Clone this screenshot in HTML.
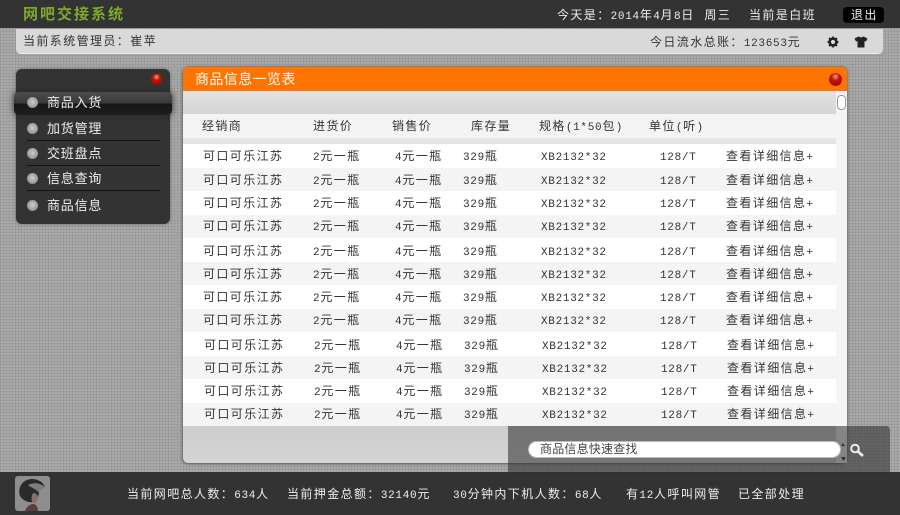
<!DOCTYPE html>
<html lang="zh"><head><meta charset="utf-8"><title>网吧交接系统</title>
<style>
*{margin:0;padding:0;box-sizing:border-box}
html,body{width:900px;height:515px;overflow:hidden}
body{position:relative;background-color:#a9a9a9;background-image:repeating-linear-gradient(0deg,rgba(90,90,90,.14) 0 1px,transparent 1px 3px),repeating-linear-gradient(90deg,rgba(90,90,90,.14) 0 1px,transparent 1px 3px);font-family:"Liberation Sans","WenQuanYi Zen Hei","Noto Sans CJK SC",sans-serif;font-size:12px;letter-spacing:1.4px;color:#333}
.a,.r span{position:absolute;white-space:nowrap;line-height:16px}
i{font:normal 11px/16px "Liberation Mono",monospace;letter-spacing:.7px}
.w{color:#eee}
#top{position:absolute;left:0;top:0;width:900px;height:28px;background:#333}
#sub{position:absolute;left:16px;top:29px;width:867px;height:25px;background:#d9d9d9;border-radius:0 0 5px 5px;border-bottom:1px solid #eee}
#menu{position:absolute;left:16px;top:69px;width:154px;height:155px;background:#333;border-radius:6px;box-shadow:0 0 3px #666}
#act{position:absolute;left:14px;top:92px;width:158px;height:23px;border-radius:5px;background:linear-gradient(#4c4c4c 0,#3a3a3a 48%,#161616 52%,#1e1e1e 100%);box-shadow:0 0 6px 1px rgba(40,40,40,.7)}
.sep{position:absolute;left:27px;width:133px;height:1px;background:#111}
.dot{position:absolute;left:27px;width:11px;height:11px;border-radius:50%;background:radial-gradient(circle at 50% 45%,#ccc,#999 65%,#666)}
.red{position:absolute;border-radius:50%;background:radial-gradient(circle at 50% 28%,#e8a090 0,#c81200 35%,#8a0a00 100%)}
#panel{position:absolute;left:183px;top:67px;width:664px;height:396px;background:linear-gradient(#ccc,#ccc 90%,#d4d4d4);border-radius:5px;box-shadow:-1px 1px 2px #666,1px 0 2px #777,0 -1px 1px #888}
#head{position:absolute;left:0;top:0;width:664px;height:24px;background:#ff7300;border-radius:5px 5px 0 0}
#band{position:absolute;left:0;top:24px;width:653px;height:23px;background:linear-gradient(#e2e1e1,#d5d3d3)}
#th{position:absolute;left:0;top:47px;width:653px;height:24px;background:#f4f4f4}
#th2{position:absolute;left:0;top:71px;width:653px;height:6px;background:#e5e5e5}
#sb{position:absolute;left:653px;top:24px;width:11px;height:372px;background:#f4f4f4}
#thumb{position:absolute;left:654px;top:28px;width:9px;height:15px;background:#fff;border:1px solid #999;border-radius:4px}
.b{position:absolute;left:183px;width:653px}
.r{position:absolute;left:0;width:900px;height:16px}
.r span:nth-child(1){left:203px}.r span:nth-child(2){left:313px}.r span:nth-child(3){left:395px}.r span:nth-child(4){left:463px}.r span:nth-child(5){left:541px}.r span:nth-child(6){left:660px}.r span:nth-child(7){left:726px}
.s{margin-left:1px}
#bot{position:absolute;left:0;top:472px;width:900px;height:43px;background:#333}
#search{position:absolute;left:508px;top:426px;width:382px;height:47px;background:rgba(45,45,45,.56);border-radius:0 4px 0 0}
#inp{position:absolute;left:528px;top:441px;width:313px;height:17px;background:#fff;border-radius:9px;border:1px solid #bbb}
.m13{font-size:13px;letter-spacing:.8px}
</style></head><body>
<div id="top"></div>
<div class="a" style="left:23px;top:6px;font-size:15px;line-height:17px;font-weight:bold;color:#7fa92e;letter-spacing:2px">网吧交接系统</div>
<div class="a w" style="left:557px;top:7px;word-spacing:5px">今天是：<i>2014</i>年<i>4</i>月<i>8</i>日 周三</div>
<div class="a w" style="left:749px;top:7px">当前是白班</div>
<div style="position:absolute;left:843px;top:7px;width:41px;height:16px;background:#000;border-radius:4px"></div>
<div class="a w" style="left:851px;top:7px">退出</div>
<div id="sub"></div>
<div class="a" style="left:23px;top:33px">当前系统管理员：崔苹</div>
<div class="a" style="left:650px;top:34px">今日流水总账：<i>123653</i>元</div>
<svg style="position:absolute;left:826px;top:35px" width="14" height="14" viewBox="0 0 14 14"><circle cx="7" cy="7" r="3.4" fill="none" stroke="#222" stroke-width="2.6"/><path d="M7 1.5v2M7 10.5v2M1.5 7h2M10.5 7h2M3 3l1.4 1.4M9.6 9.6L11 11M11 3L9.6 4.4M4.4 9.6L3 11" stroke="#222" stroke-width="1.7"/></svg>
<svg style="position:absolute;left:854px;top:36px" width="14" height="12" viewBox="0 0 14 12"><path d="M4.5 .5L.5 2.5 2 5.5 3.5 5V11.5H10.5V5L12 5.5 13.5 2.5 9.5 .5 7 1.5Z" fill="#222"/></svg>

<div id="menu"></div>
<div class="red" style="left:151px;top:74px;width:11px;height:11px"></div>
<div id="act"></div>
<div class="sep" style="top:140px"></div><div class="sep" style="top:165px"></div><div class="sep" style="top:190px"></div>
<div class="dot" style="top:97px"></div><div class="dot" style="top:123px"></div><div class="dot" style="top:148px"></div><div class="dot" style="top:173px"></div><div class="dot" style="top:200px"></div>
<div class="a w m13" style="left:47px;top:95px">商品入货</div>
<div class="a w m13" style="left:47px;top:121px">加货管理</div>
<div class="a w m13" style="left:47px;top:146px">交班盘点</div>
<div class="a w m13" style="left:47px;top:171px">信息查询</div>
<div class="a w m13" style="left:47px;top:198px">商品信息</div>

<div id="panel"><div id="head"></div><div id="band"></div><div id="th"></div><div id="th2"></div><div id="sb"></div><div id="thumb"></div></div>
<div class="a" style="left:195px;top:71px;font-size:14px;letter-spacing:.4px;color:#fff">商品信息一览表</div>
<div class="red" style="left:829px;top:73px;width:13px;height:13px"></div>
<div class="a" style="left:202px;top:118px">经销商</div>
<div class="a" style="left:313px;top:118px">进货价</div>
<div class="a" style="left:392px;top:118px">销售价</div>
<div class="a" style="left:471px;top:118px">库存量</div>
<div class="a" style="left:539px;top:118px">规格<i>(1*50</i>包<i>)</i></div>
<div class="a" style="left:649px;top:118px">单位<i>(</i>听<i>)</i></div>

<div class="b" style="top:144px;height:24px;background:#fff"></div>
<div class="b" style="top:168px;height:23px;background:#f4f4f4"></div>
<div class="b" style="top:191px;height:24px;background:#fff"></div>
<div class="b" style="top:215px;height:23px;background:#f4f4f4"></div>
<div class="b" style="top:238px;height:24px;background:#fff"></div>
<div class="b" style="top:262px;height:23px;background:#f4f4f4"></div>
<div class="b" style="top:285px;height:24px;background:#fff"></div>
<div class="b" style="top:309px;height:23px;background:#f4f4f4"></div>
<div class="b" style="top:332px;height:24px;background:#fff"></div>
<div class="b" style="top:356px;height:23px;background:#f4f4f4"></div>
<div class="b" style="top:379px;height:24px;background:#fff"></div>
<div class="b" style="top:403px;height:23px;background:#f4f4f4"></div>

<div class="r" style="top:148px"><span>可口可乐江苏</span><span><i>2</i>元一瓶</span><span><i>4</i>元一瓶</span><span><i>329</i>瓶</span><span><i>XB2132*32</i></span><span><i>128/T</i></span><span>查看详细信息<i>+</i></span></div>
<div class="r" style="top:172px"><span>可口可乐江苏</span><span><i>2</i>元一瓶</span><span><i>4</i>元一瓶</span><span><i>329</i>瓶</span><span><i>XB2132*32</i></span><span><i>128/T</i></span><span>查看详细信息<i>+</i></span></div>
<div class="r" style="top:195px"><span>可口可乐江苏</span><span><i>2</i>元一瓶</span><span><i>4</i>元一瓶</span><span><i>329</i>瓶</span><span><i>XB2132*32</i></span><span><i>128/T</i></span><span>查看详细信息<i>+</i></span></div>
<div class="r" style="top:218px"><span>可口可乐江苏</span><span><i>2</i>元一瓶</span><span><i>4</i>元一瓶</span><span><i>329</i>瓶</span><span><i>XB2132*32</i></span><span><i>128/T</i></span><span>查看详细信息<i>+</i></span></div>
<div class="r" style="top:243px"><span>可口可乐江苏</span><span><i>2</i>元一瓶</span><span><i>4</i>元一瓶</span><span><i>329</i>瓶</span><span><i>XB2132*32</i></span><span><i>128/T</i></span><span>查看详细信息<i>+</i></span></div>
<div class="r" style="top:266px"><span>可口可乐江苏</span><span><i>2</i>元一瓶</span><span><i>4</i>元一瓶</span><span><i>329</i>瓶</span><span><i>XB2132*32</i></span><span><i>128/T</i></span><span>查看详细信息<i>+</i></span></div>
<div class="r" style="top:289px"><span>可口可乐江苏</span><span><i>2</i>元一瓶</span><span><i>4</i>元一瓶</span><span><i>329</i>瓶</span><span><i>XB2132*32</i></span><span><i>128/T</i></span><span>查看详细信息<i>+</i></span></div>
<div class="r" style="top:312px"><span>可口可乐江苏</span><span><i>2</i>元一瓶</span><span><i>4</i>元一瓶</span><span><i>329</i>瓶</span><span><i>XB2132*32</i></span><span><i>128/T</i></span><span>查看详细信息<i>+</i></span></div>
<div class="r" style="top:337px"><span class="s">可口可乐江苏</span><span class="s"><i>2</i>元一瓶</span><span class="s"><i>4</i>元一瓶</span><span class="s"><i>329</i>瓶</span><span class="s"><i>XB2132*32</i></span><span class="s"><i>128/T</i></span><span class="s">查看详细信息<i>+</i></span></div>
<div class="r" style="top:360px"><span class="s">可口可乐江苏</span><span class="s"><i>2</i>元一瓶</span><span class="s"><i>4</i>元一瓶</span><span class="s"><i>329</i>瓶</span><span class="s"><i>XB2132*32</i></span><span class="s"><i>128/T</i></span><span class="s">查看详细信息<i>+</i></span></div>
<div class="r" style="top:383px"><span class="s">可口可乐江苏</span><span class="s"><i>2</i>元一瓶</span><span class="s"><i>4</i>元一瓶</span><span class="s"><i>329</i>瓶</span><span class="s"><i>XB2132*32</i></span><span class="s"><i>128/T</i></span><span class="s">查看详细信息<i>+</i></span></div>
<div class="r" style="top:406px"><span class="s">可口可乐江苏</span><span class="s"><i>2</i>元一瓶</span><span class="s"><i>4</i>元一瓶</span><span class="s"><i>329</i>瓶</span><span class="s"><i>XB2132*32</i></span><span class="s"><i>128/T</i></span><span class="s">查看详细信息<i>+</i></span></div>

<div id="bot"></div>
<div id="search"></div>
<div id="inp"></div>
<div class="a" style="left:540px;top:441px;color:#444;letter-spacing:.2px">商品信息快速查找</div>
<svg style="position:absolute;left:840px;top:443px" width="7" height="20" viewBox="0 0 7 20"><path d="M1 3L3 0 5 3ZM1 14H6L3.5 18Z" fill="#333"/></svg>
<svg style="position:absolute;left:849px;top:443px" width="16" height="15" viewBox="0 0 16 15"><circle cx="6" cy="5.5" r="3.8" fill="none" stroke="#eee" stroke-width="2"/><path d="M9 8.5L14 13" stroke="#eee" stroke-width="2.6"/></svg>
<svg style="position:absolute;left:15px;top:476px" width="35" height="35" viewBox="0 0 35 35"><rect width="35" height="35" rx="3" fill="#8e8e8e"/><path d="M5 20C2 10 9 3 17 3c6 0 11 3 13 8l-6 4c0 5-2 10-5 11-5 1-11-1-14-6z" fill="#2a2a2a"/><path d="M13 9c6-3 12-2 17 2l-7 5c-3-4-7-4-10-7z" fill="#7d7d7d"/><path d="M18 17c3 0 5 2 5 5-1 4-3 6-5 5-2-2-2-6 0-10z" fill="#8c7068"/><path d="M10 35c1-4 5-7 8-7 3 0 5 3 5 7z" fill="#56423c"/></svg>
<div class="a w" style="left:127px;top:486px">当前网吧总人数：<i>634</i>人</div>
<div class="a w" style="left:287px;top:486px">当前押金总额：<i>32140</i>元</div>
<div class="a w" style="left:453px;top:486px"><i>30</i>分钟内下机人数：<i>68</i>人</div>
<div class="a w" style="left:626px;top:486px">有<i>12</i>人呼叫网管</div>
<div class="a w" style="left:738px;top:486px">已全部处理</div>
</body></html>
